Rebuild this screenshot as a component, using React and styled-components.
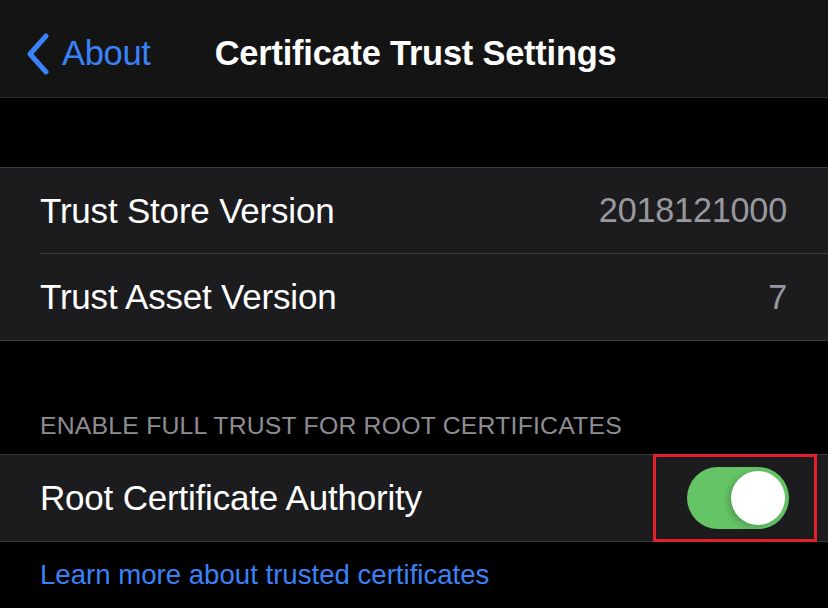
import React, { useState } from 'react';
import styled, { createGlobalStyle } from 'styled-components';

const GlobalStyle = createGlobalStyle`
  html, body {
    margin: 0;
    padding: 0;
    background: #000000;
  }
  body {
    font-family: "Liberation Sans", Arial, sans-serif;
    -webkit-font-smoothing: antialiased;
  }
`;

const Screen = styled.div`
  width: 828px;
  height: 608px;
  background: #000000;
  overflow: hidden;
  display: flex;
  flex-direction: column;
`;

const NavBar = styled.div`
  height: 98px;
  padding-top: 10px;
  box-sizing: border-box;
  background: #141414;
  border-bottom: 1px solid #2c2c2e;
  display: flex;
  align-items: center;
  flex-shrink: 0;
`;

const BackButton = styled.div`
  display: flex;
  align-items: center;
  gap: 12px;
  padding-left: 26px;
  color: #3a82f7;
  font-size: 34.5px;
  letter-spacing: -0.3px;
`;

const Title = styled.div`
  margin-left: 64px;
  color: #ffffff;
  font-size: 34.4px;
  font-weight: 700;
  letter-spacing: -0.2px;
`;

const Spacer = styled.div`
  height: ${({ h }) => h}px;
  flex-shrink: 0;
`;

const Group = styled.div`
  background: #1c1c1e;
  border-top: 1px solid #3a3a3c;
  border-bottom: 1px solid #3a3a3c;
  flex-shrink: 0;
`;

const Row = styled.div`
  height: 86px;
  margin-left: 40px;
  padding-right: 41px;
  display: flex;
  align-items: center;
  justify-content: space-between;
  border-bottom: ${({ last }) => (last ? 'none' : '1px solid #3a3a3c')};
  box-sizing: border-box;
  position: relative;
`;

const Label = styled.div`
  color: #ffffff;
  font-size: 35px;
  letter-spacing: -0.2px;
`;

const Value = styled.div`
  color: #98989f;
  font-size: 34.2px;
  letter-spacing: -0.2px;
`;

const SectionHeader = styled.div`
  padding: 0 0 14px 40px;
  color: #8d8d93;
  font-size: 24.8px;
  letter-spacing: 0.2px;
  flex-shrink: 0;
`;

const Footer = styled.a`
  display: block;
  padding: 17px 0 0 40px;
  color: #3a82f7;
  font-size: 27.6px;
  text-decoration: none;
`;

const Highlight = styled.div`
  position: absolute;
  right: 11px;
  top: -1px;
  width: 164px;
  height: 88px;
  border: 3px solid #e3202b;
  box-sizing: border-box;
  display: flex;
  align-items: center;
  justify-content: center;
`;

const Switch = styled.button`
  width: 102px;
  height: 62px;
  border: none;
  border-radius: 31px;
  padding: 0;
  background: ${({ on }) => (on ? '#65c466' : '#39393d')};
  position: relative;
  cursor: pointer;
  margin-left: 5px;

  &::after {
    content: "";
    position: absolute;
    top: 4px;
    left: ${({ on }) => (on ? '44px' : '4px')};
    width: 54px;
    height: 54px;
    border-radius: 50%;
    background: #ffffff;
    box-shadow: -3px 2px 6px rgba(0, 0, 0, 0.2);
    transition: left 0.2s;
  }
`;

const Chevron = () => (
  <svg width="24" height="42" viewBox="0 0 24 42" fill="none">
    <path d="M20 3 L4 21 L20 39" stroke="#3a82f7" strokeWidth="5" strokeLinecap="round" strokeLinejoin="round" />
  </svg>
);

export default function App() {
  const [on, setOn] = useState(true);

  return (
    <Screen>
      <GlobalStyle />
      <NavBar>
        <BackButton>
          <Chevron />
          About
        </BackButton>
        <Title>Certificate Trust Settings</Title>
      </NavBar>
      <Spacer h={69} />
      <Group>
        <Row>
          <Label>Trust Store Version</Label>
          <Value>2018121000</Value>
        </Row>
        <Row last>
          <Label>Trust Asset Version</Label>
          <Value>7</Value>
        </Row>
      </Group>
      <Spacer h={71} />
      <SectionHeader>ENABLE FULL TRUST FOR ROOT CERTIFICATES</SectionHeader>
      <Group>
        <Row last>
          <Label>Root Certificate Authority</Label>
          <Highlight>
            <Switch on={on} onClick={() => setOn(!on)} />
          </Highlight>
        </Row>
      </Group>
      <Footer>Learn more about trusted certificates</Footer>
    </Screen>
  );
}
